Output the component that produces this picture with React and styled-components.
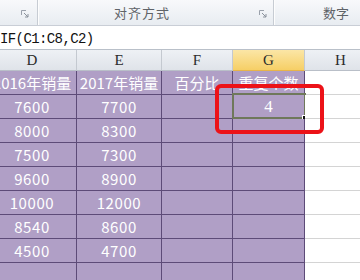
import React from "react";
import styled, { createGlobalStyle } from "styled-components";

const Global = createGlobalStyle`
  html, body { margin: 0; padding: 0; background: #fff; overflow: hidden; }
  body { width: 360px; height: 280px; }
`;

const Page = styled.div`
  width: 360px;
  height: 280px;
  overflow: hidden;
  position: relative;
  font-family: "Noto Sans CJK SC", "Liberation Sans", sans-serif;
`;

const Ribbon = styled.div`
  display: flex;
  height: 25px;
  background: linear-gradient(#f8f9fb, #e8ecf1);
  border-bottom: 1px solid #c9ced6;
`;

const Group = styled.div`
  position: relative;
  display: flex;
  align-items: center;
  justify-content: ${(p) => p.$justify || "flex-start"};
  width: ${(p) => p.$w}px;
  flex: ${(p) => (p.$w ? "none" : "1")};
  padding-left: ${(p) => p.$pl || 0}px;
  box-sizing: border-box;
  border-right: ${(p) => (p.$sep ? "1px solid #c7ccd3" : "none")};
  box-shadow: ${(p) => (p.$sep ? "1px 0 0 #fdfdfd" : "none")};
`;

const GroupLabel = styled.span`
  font-size: 13px;
  color: #5f6368;
  letter-spacing: ${(p) => p.$ls || 0}px;
  line-height: 1;
`;

const Launcher = styled.svg`
  position: absolute;
  right: ${(p) => p.$r}px;
  top: 10px;
`;

const FormulaBar = styled.div`
  height: 22px;
  background: #fff;
  border-bottom: 1px solid #b9c0c9;
  display: flex;
  align-items: center;
  margin-top: 1px;
`;

const FormulaText = styled.span`
  font-family: "Liberation Mono", monospace;
  font-size: 14px;
  letter-spacing: -0.6px;
  color: #111;
  padding-left: 0px;
  margin-top: 2px;
`;

const Sheet = styled.div`
  margin-left: -12px;
  display: grid;
  grid-template-columns: 89px 85px 71px 72px 72px;
`;

const Head = styled.div`
  height: 21px;
  box-sizing: border-box;
  border-right: 1px solid #c4c9d0;
  border-bottom: 1px solid ${(p) => (p.$sel ? "#e7b44a" : "#b9bfc8")};
  background: ${(p) =>
    p.$sel
      ? "linear-gradient(#fbe6a6, #f6cf66)"
      : "linear-gradient(#eef1f5, #dfe3e9)"};
  display: flex;
  align-items: center;
  justify-content: center;
  font-family: "Liberation Serif", serif;
  font-size: 15px;
  color: #2b2b2b;
  padding-top: 1px;
`;

const Cell = styled.div`
  position: relative;
  height: 24px;
  box-sizing: border-box;
  border-right: 1px solid ${(p) => (p.$purple ? "#5d4b78" : "#d4d4d4")};
  border-bottom: 1px solid ${(p) => (p.$purple ? "#5d4b78" : "#d4d4d4")};
  background: ${(p) => (p.$purple ? "#b09fc6" : "#fff")};
  display: flex;
  align-items: center;
  justify-content: center;
  color: #fff;
  font-size: 15px;
  white-space: nowrap;
  overflow: visible;
  line-height: 1;
`;

const CellText = styled.span`
  font-family: ${(p) =>
    p.$serif
      ? '"Liberation Serif", serif'
      : '"Noto Sans CJK SC", "DejaVu Sans", sans-serif'};
  font-size: ${(p) => (p.$serif ? 17 : 15)}px;
  letter-spacing: ${(p) => (p.$num ? 0.6 : 0)}px;
`;

const Selection = styled.div`
  position: absolute;
  left: -1px;
  top: -2px;
  right: -2px;
  bottom: -1px;
  border: 2px solid #6f785b;
  pointer-events: none;
`;

const FillHandle = styled.div`
  position: absolute;
  right: -4px;
  bottom: -4px;
  width: 5px;
  height: 5px;
  background: #111;
  border: 1px solid #fff;
  border-right: none;
  border-bottom: none;
`;

const RedBox = styled.div`
  position: absolute;
  left: 215px;
  top: 84px;
  width: 109px;
  height: 50px;
  box-sizing: border-box;
  border: 4px solid #ec1218;
  border-radius: 6px;
  pointer-events: none;
`;

const cols = ["D", "E", "F", "G", "H"];
const rows = [
  ["2016年销量", "2017年销量", "百分比", "重复个数"],
  ["7600", "7700", "", "4"],
  ["8000", "8300", "", ""],
  ["7500", "7300", "", ""],
  ["9600", "8900", "", ""],
  ["10000", "12000", "", ""],
  ["8540", "8600", "", ""],
  ["4500", "4700", "", ""],
  ["", "", "", ""],
];

const LauncherIcon = ({ r }) => (
  <Launcher $r={r} width="8" height="8" viewBox="0 0 8 8">
    <path d="M0.5 0.5 H5 M0.5 0.5 V5" stroke="#9aa1ab" strokeWidth="1" fill="none" />
    <path d="M3 3 L7 7 M7 4 V7 H4" stroke="#8a919b" strokeWidth="1" fill="none" />
  </Launcher>
);

export default function App() {
  return (
    <Page>
      <Global />
      <Ribbon>
        <Group $w={38} $sep>
          <LauncherIcon r={8} />
        </Group>
        <Group $w={236} $sep $pl={76}>
          <GroupLabel $ls={1}>对齐方式</GroupLabel>
          <LauncherIcon r={6} />
        </Group>
        <Group $pl={49}>
          <GroupLabel $ls={0}>数字</GroupLabel>
        </Group>
      </Ribbon>
      <FormulaBar>
        <FormulaText>IF(C1:C8,C2)</FormulaText>
      </FormulaBar>
      <Sheet>
        {cols.map((c) => (
          <Head key={c} $sel={c === "G"}>
            {c}
          </Head>
        ))}
        {rows.map((r, ri) =>
          [...r, null].map((v, ci) => {
            const purple = ci < 4;
            const sel = ri === 1 && ci === 3;
            return (
              <Cell key={`${ri}-${ci}`} $purple={purple}>
                {v ? (
                  <CellText $serif={sel} $num={/^\d+$/.test(v) && !sel}>
                    {v}
                  </CellText>
                ) : null}
                {sel && (
                  <Selection>
                    <FillHandle />
                  </Selection>
                )}
              </Cell>
            );
          })
        )}
      </Sheet>
      <RedBox />
    </Page>
  );
}
